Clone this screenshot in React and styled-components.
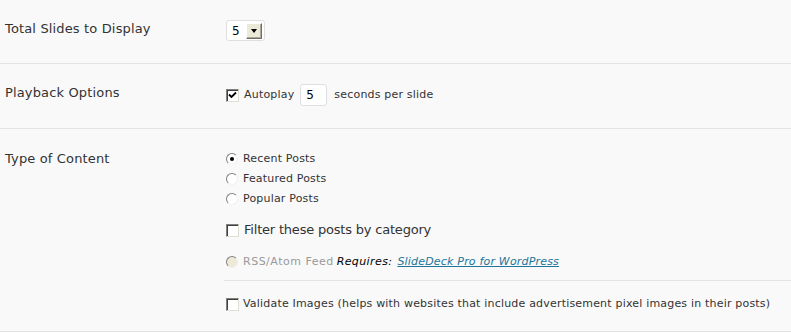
import React from "react";
import styled, { createGlobalStyle } from "styled-components";

const Global = createGlobalStyle`
  html, body { margin: 0; padding: 0; background: #f9f9f9; }
  body { font-family: "DejaVu Sans", Verdana, sans-serif; color: #333; }
`;

const Page = styled.div`
  width: 791px;
  background: #f9f9f9;
`;

const Row = styled.div`
  display: grid;
  grid-template-columns: 224px 1fr;
  border-bottom: 1px solid #e3e3e3;
  padding: ${(p) => p.$pad || "0"};
`;

const Label = styled.div`
  font-family: "DejaVu Sans", Verdana, sans-serif;
  font-size: 13px;
  letter-spacing: 0.15px;
  line-height: 16px;
  color: #333;
  padding: ${(p) => p.$pad || "0"} 0 0 5px;
`;

const Field = styled.div`
  display: flex;
  flex-direction: column;
`;

const Line = styled.div`
  display: flex;
  align-items: center;
  gap: ${(p) => p.$gap || "5px"};
  font-size: 11px;
  letter-spacing: 0.19px;
  line-height: 14px;
  color: #333;
  height: ${(p) => p.$h || "20px"};
  padding-left: 2px;
  margin: ${(p) => p.$m || "0"};
`;

const Select = styled.div`
  box-sizing: border-box;
  display: flex;
  align-items: center;
  margin-left: 2px;
  width: 39px;
  height: 21px;
  border: 1px solid #dfdfdf;
  border-radius: 3px;
  background: #fff;
  font-size: 12px;
  color: #000;
  padding: 0 2px 0 5px;
  gap: 6px;
`;

const DropBtn = styled.span`
  width: 16px;
  height: 16px;
  box-sizing: border-box;
  background: #ece9d8;
  border-top: 1px solid #fff;
  border-left: 1px solid #fff;
  border-right: 1px solid #716f64;
  border-bottom: 1px solid #716f64;
  box-shadow: inset -1px -1px 0 #aca899;
  display: flex;
  align-items: center;
  justify-content: center;
`;

const Arrow = styled.span`
  width: 0;
  height: 0;
  border-left: 3.5px solid transparent;
  border-right: 3.5px solid transparent;
  border-top: 4px solid #000;
`;

const Check = styled.span`
  width: 13px;
  height: 13px;
  box-sizing: border-box;
  flex: none;
  border-top: 1px solid #808080;
  border-left: 1px solid #808080;
  border-right: 1px solid #e0ded4;
  border-bottom: 1px solid #e0ded4;
  box-shadow: inset 1px 1px 0 #404040;
  background: #fff;
  display: flex;
  align-items: center;
  justify-content: center;
`;

const Radio = styled.span`
  width: 12px;
  height: 12px;
  box-sizing: border-box;
  flex: none;
  border-radius: 50%;
  border: 1px solid;
  border-color: #808080 #f0f0f0 #f0f0f0 #808080;
  background: ${(p) => (p.$disabled ? "#ece9d8" : "#fff")};
  display: flex;
  align-items: center;
  justify-content: center;
  &::after {
    content: "";
    width: 4px;
    height: 4px;
    border-radius: 50%;
    background: ${(p) => (p.$on ? "#000" : "transparent")};
  }
`;

const NumInput = styled.span`
  box-sizing: border-box;
  width: 27px;
  height: 22px;
  border: 1px solid #dfdfdf;
  border-radius: 3px;
  background: #fff;
  font-size: 12px;
  line-height: 20px;
  color: #000;
  padding-left: 5px;
  margin: 0 2px 0 1px;
`;

const Big = styled.span`
  font-family: "DejaVu Sans", Verdana, sans-serif;
  font-size: 13px;
  letter-spacing: -0.2px;
`;

const Muted = styled.span`
  color: #999;
  letter-spacing: 0.5px;
`;

const Req = styled.em`
  color: #000;
  margin-left: -2px;
  letter-spacing: 0.4px;
`;

const Link = styled.a`
  color: #21759b;
  font-style: italic;
  text-decoration: underline;
`;

const SubSection = styled.div`
  border-top: 1px solid #e3e3e3;
  padding: 13px 0 17px;
`;

export default function App() {
  return (
    <Page>
      <Global />
      <Row $pad="20px 0 22px">
        <Label $pad="1px">Total Slides to Display</Label>
        <Field>
          <Select>
            5
            <DropBtn>
              <Arrow />
            </DropBtn>
          </Select>
        </Field>
      </Row>
      <Row $pad="20px 0 22px">
        <Label $pad="1px">Playback Options</Label>
        <Field>
          <Line $h="22px" $gap="5px">
            <Check>
              <svg width="9" height="9" viewBox="0 0 9 9">
                <path d="M1 3.5 L3.5 6 L8 1.5" stroke="#000" strokeWidth="1.8" fill="none" />
              </svg>
            </Check>
            <span>Autoplay</span>
            <NumInput>5</NumInput>
            <span>seconds per slide</span>
          </Line>
        </Field>
      </Row>
      <Row $pad="20px 0 0">
        <Label $pad="2px">Type of Content</Label>
        <Field>
          <Line>
            <Radio $on />
            <span>Recent Posts</span>
          </Line>
          <Line>
            <Radio />
            <span>Featured Posts</span>
          </Line>
          <Line>
            <Radio />
            <span>Popular Posts</span>
          </Line>
          <Line $h="22px" $m="10px 0 0">
            <Check />
            <Big>Filter these posts by category</Big>
          </Line>
          <Line $h="22px" $m="10px 0 7px">
            <Radio $disabled />
            <Muted>RSS/Atom Feed</Muted>
            <Req>Requires:</Req>
            <Link href="#">SlideDeck Pro for WordPress</Link>
          </Line>
          <SubSection>
            <Line $gap="4px">
              <Check />
              <span>Validate Images (helps with websites that include advertisement pixel images in their posts)</span>
            </Line>
          </SubSection>
        </Field>
      </Row>
    </Page>
  );
}
